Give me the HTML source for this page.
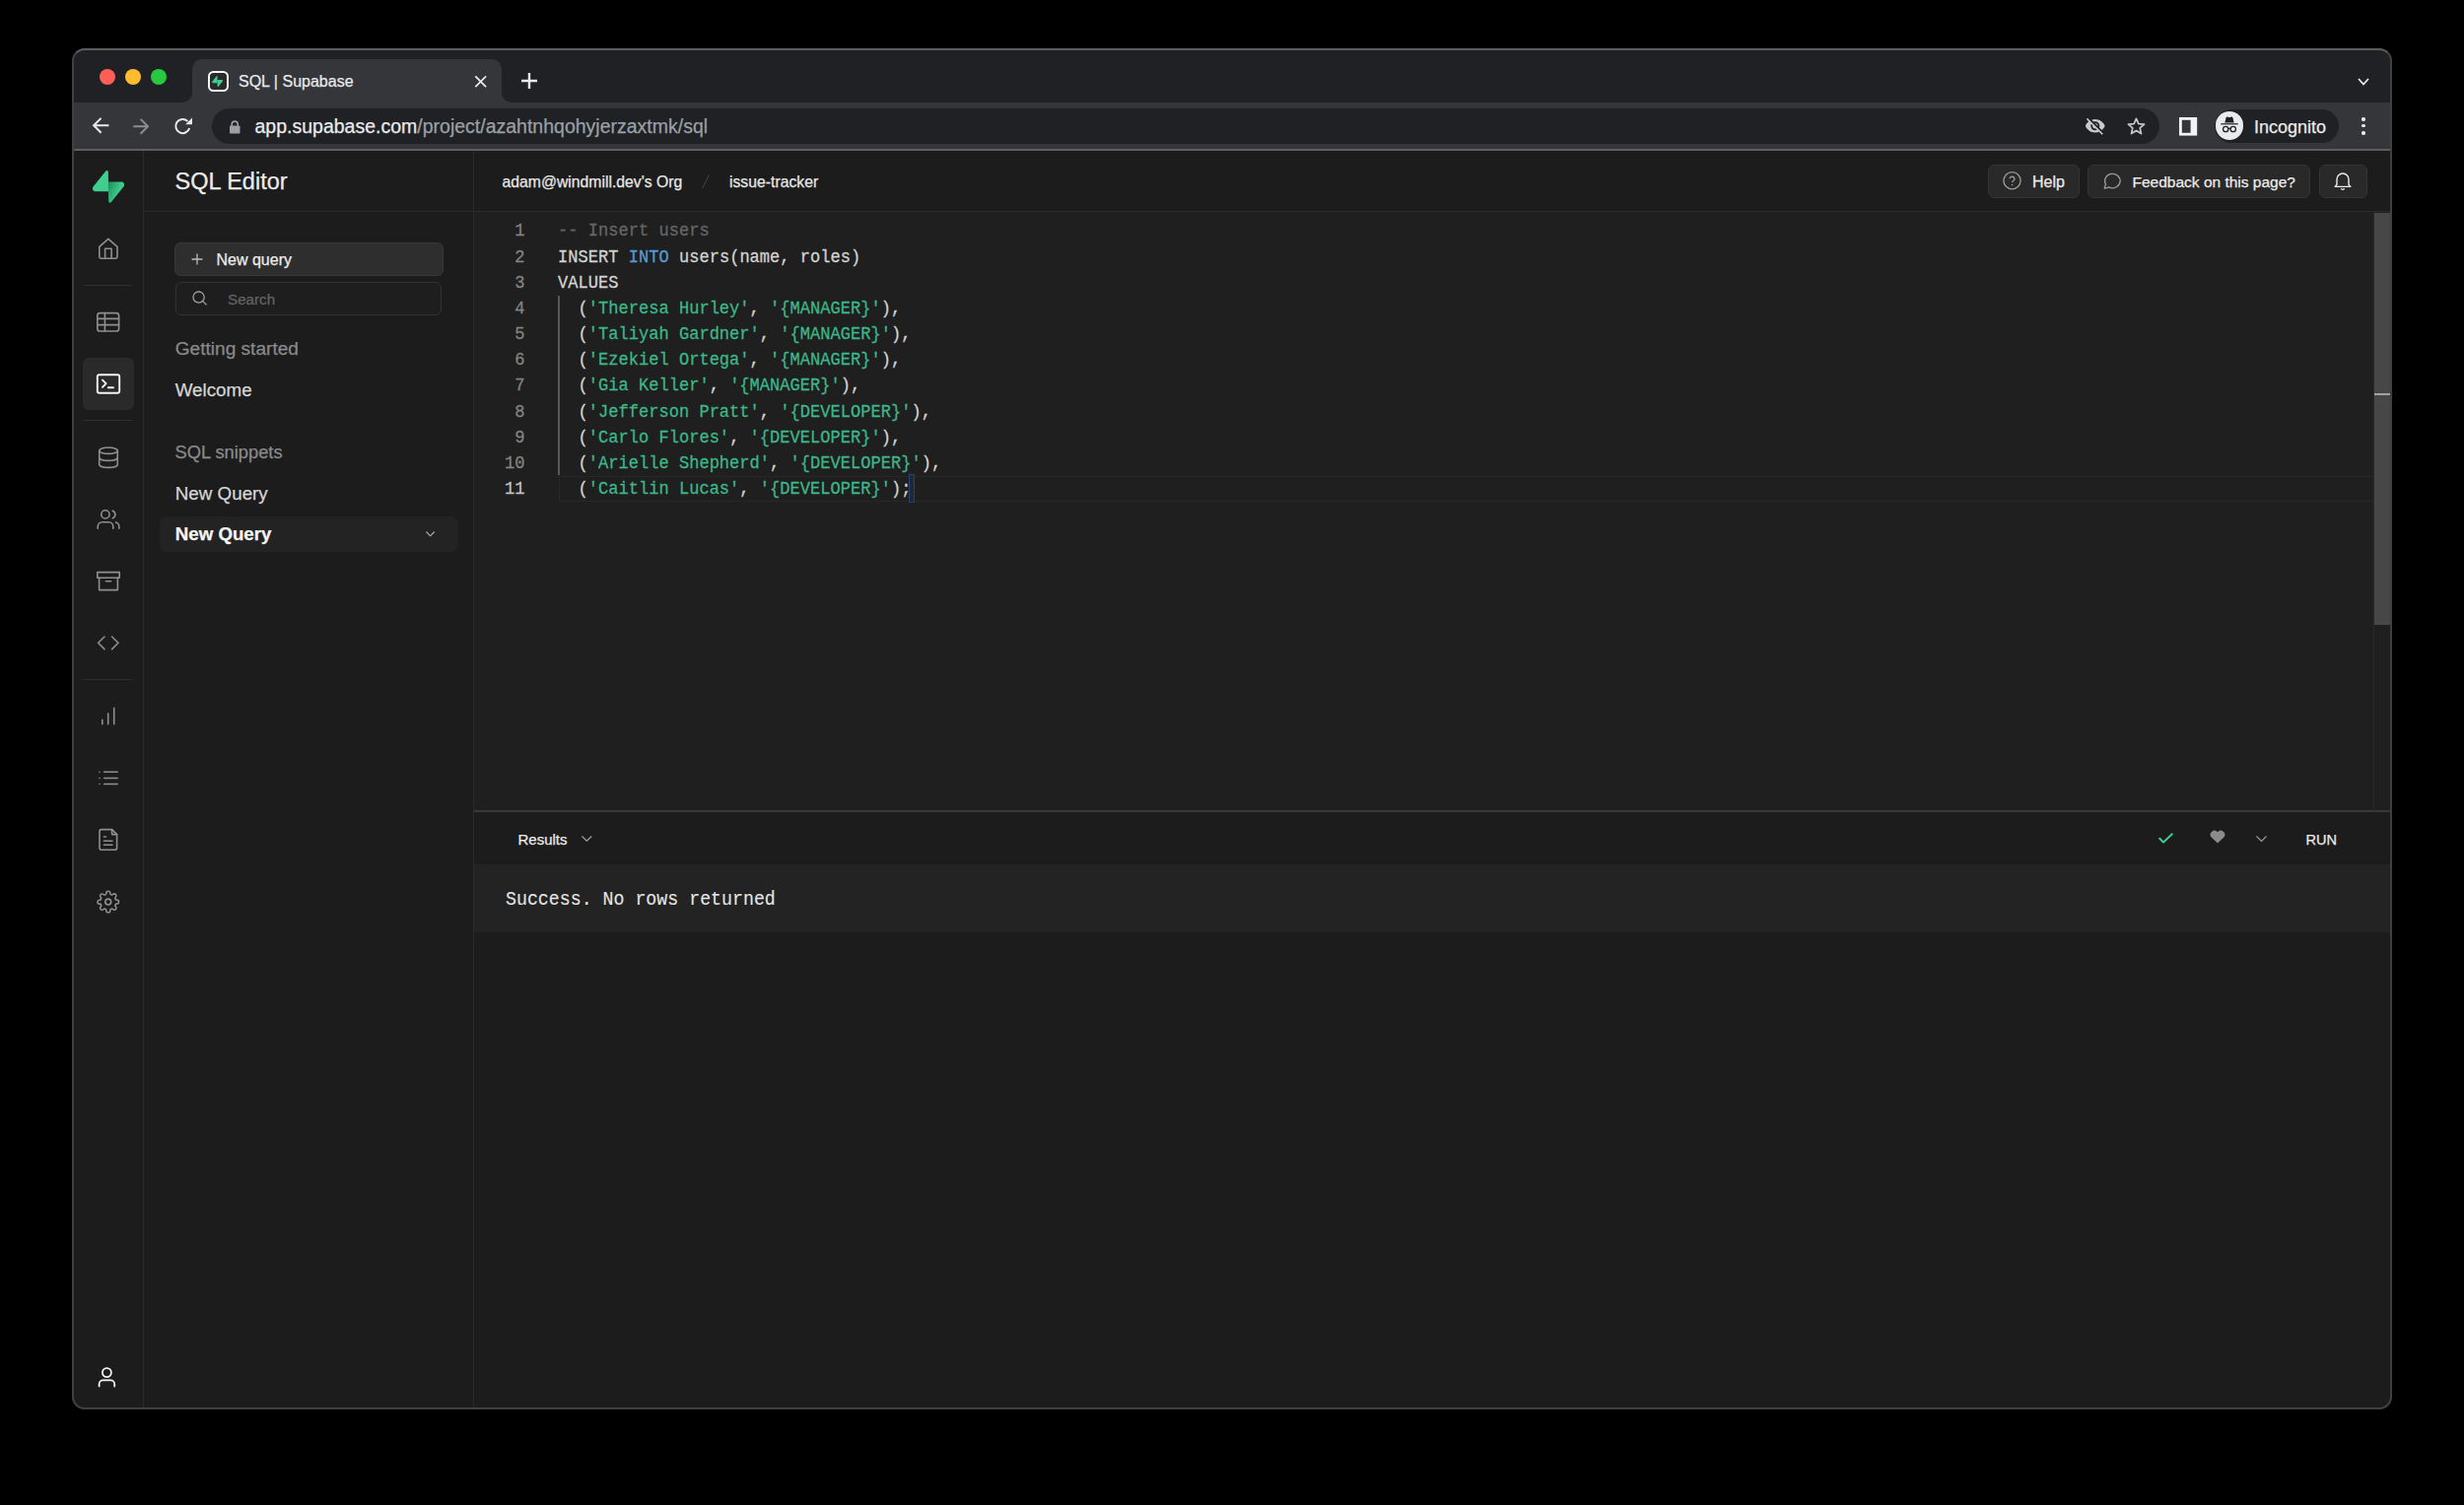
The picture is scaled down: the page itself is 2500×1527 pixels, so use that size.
<!DOCTYPE html>
<html><head><meta charset="utf-8">
<style>
*{box-sizing:border-box;margin:0;padding:0}
html,body{width:2500px;height:1527px;background:#000;overflow:hidden}
body{font-family:"Liberation Sans",sans-serif;position:relative}
.a{position:absolute}
#win{position:absolute;left:73px;top:49px;width:2354px;height:1381px;border-radius:13px;overflow:hidden;background:#1c1c1c}
#inner{position:absolute;left:-73px;top:-49px;width:2500px;height:1527px}
#winb{position:absolute;left:73px;top:49px;width:2354px;height:1381px;border-radius:13px;border:2px solid #404040;border-top-color:#5c5c5c;pointer-events:none}
.mono{font-family:"Liberation Mono",monospace}
.t{white-space:pre;line-height:1;-webkit-text-stroke:0.25px currentColor}
svg{position:absolute;overflow:visible}
</style></head><body>
<div id="win"><div id="inner">
  <!-- title bar -->
  <div class="a" style="left:0;top:0;width:2500px;height:104px;background:#202124"></div>
  <!-- tab -->
  <div class="a" style="left:195px;top:60px;width:314px;height:44px;background:#35363a;border-radius:10px 10px 0 0"></div>
  <div class="a" style="left:185px;top:94px;width:10px;height:10px;background:#35363a"></div>
  <div class="a" style="left:175px;top:84px;width:20px;height:20px;background:#202124;border-radius:0 0 10px 0"></div>
  <div class="a" style="left:509px;top:94px;width:10px;height:10px;background:#35363a"></div>
  <div class="a" style="left:509px;top:84px;width:20px;height:20px;background:#202124;border-radius:0 0 0 10px"></div>
  <!-- toolbar -->
  <div class="a" style="left:0;top:104px;width:2500px;height:48px;background:#35363a"></div>
  <div class="a" style="left:0;top:151px;width:2500px;height:2px;background:#5c5d5d"></div>

  <!-- traffic lights -->
  <div class="a" style="left:100.5px;top:69.7px;width:16px;height:16px;border-radius:50%;background:#fe5f57"></div>
  <div class="a" style="left:126.5px;top:69.7px;width:16px;height:16px;border-radius:50%;background:#febc2e"></div>
  <div class="a" style="left:152.8px;top:69.7px;width:16px;height:16px;border-radius:50%;background:#28c840"></div>
  <!-- favicon -->
  <div class="a" style="left:210.5px;top:71.9px;width:21px;height:21px;border:2.5px solid #f4f4f4;border-radius:5.5px;background:#2a2a2a"></div>
  <svg style="left:215px;top:76.7px" width="11.2" height="11.2" viewBox="0 0 109 113"><path d="M63.7 110.3c-2.9 3.6-8.7 1.6-8.8-3l-1-67.8h45.9c8.3 0 12.9 9.6 7.7 16z" fill="#3ecf8e"/><path d="M45.3 2.1c2.9-3.6 8.7-1.6 8.8 3l.4 67.8H9.2c-8.3 0-12.9-9.6-7.7-16z" fill="#3ecf8e"/></svg>
  <div class="a t" style="left:242px;top:75px;font-size:16px;color:#e8eaed">SQL | Supabase</div>
  <!-- close x -->
  <svg style="left:482px;top:76.8px" width="11.5" height="11.5" viewBox="0 0 12 12"><path d="M1 1L11 11M11 1L1 11" stroke="#e8eaed" stroke-width="1.8" stroke-linecap="square"/></svg>
  <!-- new tab plus -->
  <svg style="left:529px;top:74px" width="16" height="16" viewBox="0 0 16 16"><path d="M8 0V16M0 8H16" stroke="#e8eaed" stroke-width="2.4"/></svg>
  <!-- tab strip chevron -->
  <svg style="left:2392px;top:78.7px" width="12" height="8" viewBox="0 0 12 8"><path d="M1 1L6 6.5L11 1" stroke="#e8eaed" stroke-width="1.8" fill="none"/></svg>
  <!-- back -->
  <svg style="left:93px;top:119.3px" width="17.5" height="16.6" viewBox="0 0 17.5 16.6"><path d="M17.4 8.3H2M9.6 0.9L2.1 8.3L9.6 15.7" stroke="#e8eaed" stroke-width="2" fill="none"/></svg>
  <!-- forward -->
  <svg style="left:135.2px;top:119.5px" width="16.6" height="16.6" viewBox="0 0 16.6 16.6"><path d="M0.2 8.3H15M7.6 0.9L15 8.3L7.6 15.7" stroke="#8b8d90" stroke-width="2" fill="none"/></svg>
  <!-- reload -->
  <svg style="left:177px;top:119.3px" width="18" height="18" viewBox="0 0 18 18"><path d="M15.2 11A7.1 7.1 0 1 1 13.4 4" stroke="#e8eaed" stroke-width="2" fill="none"/><path d="M11.2 7.3H18V0.5Z" fill="#e8eaed"/></svg>
  <!-- omnibox -->
  <div class="a" style="left:214.6px;top:110px;width:1976px;height:35.8px;border-radius:18px;background:#202124"></div>
  <svg style="left:233px;top:121.6px" width="10.5" height="13.5" viewBox="0 0 10.5 13.5"><path d="M2.2 6V4.2A3.05 3.05 0 0 1 8.3 4.2V6" stroke="#9aa0a6" stroke-width="1.6" fill="none"/><rect x="0" y="5.6" width="10.5" height="7.9" rx="1" fill="#9aa0a6"/></svg>
  <div class="a t" style="left:258.5px;top:119px;font-size:19.5px;color:#e8eaed">app.supabase.com<span style="color:#9aa0a6">/project/azahtnhqohyjerzaxtmk/sql</span></div>
  <!-- eye slash -->
  <svg style="left:2115.2px;top:116.65px" width="21.6" height="21.6" viewBox="0 0 24 24"><path fill="#c8cacc" d="M12 7c2.76 0 5 2.24 5 5 0 .65-.13 1.26-.36 1.83l2.92 2.92c1.51-1.26 2.7-2.89 3.43-4.75-1.73-4.39-6-7.5-11-7.5-1.4 0-2.74.25-3.98.7l2.16 2.16C10.74 7.13 11.35 7 12 7zM2 4.27l2.28 2.28.46.46C3.08 8.3 1.78 10.02 1 12c1.73 4.39 6 7.5 11 7.5 1.550 0 3.03-.3 4.38-.84l.42.42L19.730 22 21 20.73 3.27 3 2 4.27zM7.53 9.8l1.55 1.55c-.05.21-.08.43-.08.65 0 1.66 1.34 3 3 3 .22 0 .44-.03.65-.08l1.55 1.55c-.67.33-1.41.53-2.2.53-2.76 0-5-2.24-5-5 0-.79.2-1.53.53-2.2zm4.31-.78l3.15 3.15.02-.16c0-1.66-1.34-3-3-3l-.17.01z"/></svg>
  <!-- star -->
  <svg style="left:2158px;top:119px" width="19" height="18" viewBox="0 0 19 18"><path d="M9.5 1.3L11.8 6.6L17.6 7.1L13.2 10.9L14.5 16.6L9.5 13.6L4.5 16.6L5.8 10.9L1.4 7.1L7.2 6.6Z" stroke="#c4c7ca" stroke-width="1.7" fill="none" stroke-linejoin="round"/></svg>
  <!-- side panel -->
  <svg style="left:2211px;top:118.8px" width="18.2" height="18.6" viewBox="0 0 18.2 18.6"><rect x="0" y="0" width="18.2" height="18.6" fill="#f1f3f4"/><rect x="2.8" y="2.8" width="8.8" height="13" fill="#35363a"/></svg>
  <!-- incognito pill -->
  <div class="a" style="left:2246.6px;top:111px;width:126.5px;height:34px;border-radius:17px;background:#202124"></div>
  <div class="a" style="left:2247.7px;top:113.3px;width:28.8px;height:28.8px;border-radius:50%;background:#e8eaed"></div>
  <svg style="left:2250px;top:116px" width="24" height="22" viewBox="0 0 24 22"><path d="M7.3 8.6L8.6 3.3C8.8 2.6 9.5 2.3 10.1 2.6L12 3.3L13.9 2.6C14.5 2.3 15.2 2.6 15.4 3.3L16.7 8.6Z" fill="#202124"/><rect x="3.2" y="9.2" width="17.6" height="1.2" fill="#202124"/><circle cx="8.2" cy="15" r="2.7" stroke="#202124" stroke-width="1.3" fill="none"/><circle cx="15.8" cy="15" r="2.7" stroke="#202124" stroke-width="1.3" fill="none"/><path d="M10.9 14.6Q12 13.8 13.1 14.6" stroke="#202124" stroke-width="1.2" fill="none"/></svg>
  <div class="a t" style="left:2287px;top:120px;font-size:18px;color:#e8eaed">Incognito</div>
  <!-- kebab -->
  <div class="a" style="left:2396.3px;top:119.4px;width:3.4px;height:3.4px;border-radius:50%;background:#e8eaed"></div>
  <div class="a" style="left:2396.3px;top:126px;width:3.4px;height:3.4px;border-radius:50%;background:#e8eaed"></div>
  <div class="a" style="left:2396.3px;top:133.4px;width:3.4px;height:3.4px;border-radius:50%;background:#e8eaed"></div>
  <!-- app -->
  <div class="a" style="left:0;top:153px;width:2500px;height:1380px;background:#1c1c1c"></div>
  <!-- icon sidebar border -->
  <div class="a" style="left:145px;top:153px;width:1px;height:1300px;background:#2b2b2b"></div>
  <!-- second column border -->
  <div class="a" style="left:480px;top:153px;width:1px;height:1300px;background:#2b2b2b"></div>
  <!-- header bottom border -->
  <div class="a" style="left:146px;top:213.5px;width:2300px;height:1px;background:#2b2b2b"></div>
  <!-- editor bg -->
  <div class="a" style="left:481px;top:214.5px;width:1950px;height:608px;background:#1f1f1f"></div>
  <!-- splitter -->
  <div class="a" style="left:481px;top:822.3px;width:1950px;height:1.6px;background:#393939"></div>
  <!-- results header -->
  <div class="a" style="left:481px;top:824px;width:1950px;height:53px;background:#1c1c1c"></div>
  <!-- success panel -->
  <div class="a" style="left:481px;top:877px;width:1950px;height:68.8px;background:#232323"></div>

  <!-- sidebar logo -->
  <svg style="left:93.5px;top:173px" width="32" height="33" viewBox="0 0 109 113"><defs><linearGradient id="lg1" x1="53.97" y1="54.97" x2="94.16" y2="71.83" gradientUnits="userSpaceOnUse"><stop offset="0" stop-color="#249361"/><stop offset="1" stop-color="#3ECF8E"/></linearGradient></defs><path d="M63.7 110.3c-2.9 3.6-8.7 1.6-8.8-3l-1-67.8h45.9c8.3 0 12.9 9.6 7.7 16z" fill="url(#lg1)"/><path d="M45.3 2.1c2.9-3.6 8.7-1.6 8.8 3l.4 67.8H9.2c-8.3 0-12.9-9.6-7.7-16z" fill="#3ECF8E"/></svg>
  <!-- separators -->
  <div class="a" style="left:84px;top:289px;width:50px;height:1px;background:#2e2e2e"></div>
  <div class="a" style="left:84px;top:426px;width:50px;height:1px;background:#2e2e2e"></div>
  <div class="a" style="left:84px;top:689px;width:50px;height:1px;background:#2e2e2e"></div>
  <!-- active bg -->
  <div class="a" style="left:84px;top:362.7px;width:51.7px;height:53.3px;border-radius:6px;background:#2a2a2a"></div>
  <!-- CONTENT -->
  <div class="a t" style="left:177.5px;top:173.3px;font-size:23.5px;color:#ededed;">SQL Editor</div>
  <div class="a" style="left:176.8px;top:245.7px;width:273px;height:34px;border-radius:6px;background:#2e2e2e;border:1px solid #383838"></div>
  <svg style="left:194px;top:257.4px" width="12" height="12" viewBox="0 0 12 12"><path d="M6 0.5V11.5M0.5 6H11.5" stroke="#bdbdbd" stroke-width="1.3"/></svg>
  <div class="a t" style="left:219.5px;top:256.45px;font-size:16px;color:#ededed;">New query</div>
  <div class="a" style="left:178.3px;top:286px;width:269.7px;height:33.5px;border-radius:6px;background:#1e1e1e;border:1px solid #333"></div>
  <svg style="left:194.8px;top:295.4px" width="16" height="15" viewBox="0 0 16 15"><circle cx="6.6" cy="6.6" r="5.6" stroke="#a3a3a3" stroke-width="1.3" fill="none"/><path d="M10.8 10.6L14.6 14.4" stroke="#a3a3a3" stroke-width="1.3"/></svg>
  <div class="a t" style="left:231px;top:295.63px;font-size:15.2px;color:#646464;">Search</div>
  <div class="a t" style="left:177.7px;top:344.31px;font-size:19.1px;color:#8a8a8a;">Getting started</div>
  <div class="a t" style="left:177.7px;top:386.8px;font-size:18.8px;color:#d6d6d6;">Welcome</div>
  <div class="a t" style="left:177.5px;top:449.51px;font-size:18.3px;color:#8a8a8a;">SQL snippets</div>
  <div class="a t" style="left:177.8px;top:491.5px;font-size:18.8px;color:#d6d6d6;">New Query</div>
  <div class="a" style="left:161.6px;top:523.6px;width:303.2px;height:36.4px;border-radius:7px;background:#232323"></div>
  <div class="a t" style="left:177.8px;top:532.6px;font-size:18.7px;color:#f6f6f6;font-weight:700;">New Query</div>
  <svg style="left:432.4px;top:539px" width="9.2" height="5.4" viewBox="0 0 9.2 5.4"><path d="M0.5 0.5L4.6 4.8L8.7 0.5" stroke="#b5b5b5" stroke-width="1.1" fill="none"/></svg>
  <div class="a t" style="left:509.5px;top:177.3px;font-size:15.75px;color:#e8e8e8;">adam@windmill.dev's Org</div>
  <svg style="left:712px;top:176.8px" width="8" height="14.6" viewBox="0 0 8 14.6"><path d="M7.5 0.3L0.5 14.3" stroke="#3c3c3c" stroke-width="1.2"/></svg>
  <div class="a t" style="left:740px;top:177.3px;font-size:15.75px;color:#e8e8e8;">issue-tracker</div>
  <div class="a" style="left:2016.9px;top:167.1px;width:93.1px;height:33.6px;border-radius:6px;background:#292929;border:1px solid #343434"></div>
  <div class="a" style="left:2118.2px;top:167.1px;width:225.6px;height:33.6px;border-radius:6px;background:#292929;border:1px solid #343434"></div>
  <div class="a" style="left:2352.6px;top:167.1px;width:49.2px;height:33.6px;border-radius:6px;background:#292929;border:1px solid #343434"></div>
  <svg style="left:2032px;top:174.4px" width="19" height="18.5" viewBox="0 0 19 18.5"><circle cx="9.5" cy="9.25" r="8.6" stroke="#9a9a9a" stroke-width="1.3" fill="none"/><path d="M7 7.1A2.55 2.55 0 0 1 12 7.6C12 9.3 9.5 9.9 9.5 11" stroke="#9a9a9a" stroke-width="1.3" fill="none"/><circle cx="9.5" cy="13.6" r="0.8" fill="#9a9a9a"/></svg>
  <div class="a t" style="left:2062px;top:176.75px;font-size:16px;color:#ededed;">Help</div>
  <svg style="left:2134.4px;top:175.3px" width="18" height="17" viewBox="0 0 18 17"><path d="M1.2 16C1.5 14.2 2 13 2.6 12.1A7.8 7.2 0 1 1 5.7 14.9C4.5 15.5 2.9 15.9 1.2 16Z" stroke="#9a9a9a" stroke-width="1.3" fill="none" stroke-linejoin="round"/></svg>
  <div class="a t" style="left:2163.5px;top:177.18px;font-size:15.5px;color:#ededed;">Feedback on this page?</div>
  <svg style="left:2368px;top:174.4px" width="18" height="19" viewBox="0 0 18 19"><path d="M3 13.2V8A6 6 0 0 1 15 8V13.2L16.8 15.4H1.2Z" stroke="#ededed" stroke-width="1.4" fill="none" stroke-linejoin="round"/><path d="M7.3 17.2A1.9 1.9 0 0 0 10.7 17.2" stroke="#ededed" stroke-width="1.4" fill="none"/></svg>
  <div class="a" style="left:2408px;top:214.6px;width:1px;height:608px;background:#2a2a2a"></div>
  <div class="a" style="left:2409px;top:215.8px;width:17px;height:418.2px;background:#474747"></div>
  <div class="a" style="left:2409px;top:399.4px;width:17px;height:2px;background:#a3a3a3"></div>
  <div class="a" style="left:567px;top:483.3px;width:1841px;height:25.8px;border:1px solid #282828;border-right:none"></div>
  <div class="a" style="left:566.2px;top:299.6px;width:1.6px;height:182.6px;background:#585858"></div>
  <div class="a t mono" style="left:566.05px;top:226.47px;font-size:17.07px;transform:scaleY(1.1);transform-origin:0 13px;color:#d4d4d4;"><span style="color:#666">-- Insert users</span></div>
  <div class="a t mono" style="left:483px;width:49.5px;text-align:right;top:226.47px;font-size:17.07px;transform:scaleY(1.1);transform-origin:0 13px;color:#858585">1</div>
  <div class="a t mono" style="left:566.05px;top:252.62px;font-size:17.07px;transform:scaleY(1.1);transform-origin:0 13px;color:#d4d4d4;">INSERT <span style="color:#569cd6">INTO</span> users(name, roles)</div>
  <div class="a t mono" style="left:483px;width:49.5px;text-align:right;top:252.62px;font-size:17.07px;transform:scaleY(1.1);transform-origin:0 13px;color:#858585">2</div>
  <div class="a t mono" style="left:566.05px;top:278.77px;font-size:17.07px;transform:scaleY(1.1);transform-origin:0 13px;color:#d4d4d4;">VALUES</div>
  <div class="a t mono" style="left:483px;width:49.5px;text-align:right;top:278.77px;font-size:17.07px;transform:scaleY(1.1);transform-origin:0 13px;color:#858585">3</div>
  <div class="a t mono" style="left:566.05px;top:304.92px;font-size:17.07px;transform:scaleY(1.1);transform-origin:0 13px;color:#d4d4d4;">  (<span style="color:#3cb88a">'Theresa Hurley'</span>, <span style="color:#3cb88a">'{MANAGER}'</span>),</div>
  <div class="a t mono" style="left:483px;width:49.5px;text-align:right;top:304.92px;font-size:17.07px;transform:scaleY(1.1);transform-origin:0 13px;color:#858585">4</div>
  <div class="a t mono" style="left:566.05px;top:331.07px;font-size:17.07px;transform:scaleY(1.1);transform-origin:0 13px;color:#d4d4d4;">  (<span style="color:#3cb88a">'Taliyah Gardner'</span>, <span style="color:#3cb88a">'{MANAGER}'</span>),</div>
  <div class="a t mono" style="left:483px;width:49.5px;text-align:right;top:331.07px;font-size:17.07px;transform:scaleY(1.1);transform-origin:0 13px;color:#858585">5</div>
  <div class="a t mono" style="left:566.05px;top:357.22px;font-size:17.07px;transform:scaleY(1.1);transform-origin:0 13px;color:#d4d4d4;">  (<span style="color:#3cb88a">'Ezekiel Ortega'</span>, <span style="color:#3cb88a">'{MANAGER}'</span>),</div>
  <div class="a t mono" style="left:483px;width:49.5px;text-align:right;top:357.22px;font-size:17.07px;transform:scaleY(1.1);transform-origin:0 13px;color:#858585">6</div>
  <div class="a t mono" style="left:566.05px;top:383.37px;font-size:17.07px;transform:scaleY(1.1);transform-origin:0 13px;color:#d4d4d4;">  (<span style="color:#3cb88a">'Gia Keller'</span>, <span style="color:#3cb88a">'{MANAGER}'</span>),</div>
  <div class="a t mono" style="left:483px;width:49.5px;text-align:right;top:383.37px;font-size:17.07px;transform:scaleY(1.1);transform-origin:0 13px;color:#858585">7</div>
  <div class="a t mono" style="left:566.05px;top:409.52px;font-size:17.07px;transform:scaleY(1.1);transform-origin:0 13px;color:#d4d4d4;">  (<span style="color:#3cb88a">'Jefferson Pratt'</span>, <span style="color:#3cb88a">'{DEVELOPER}'</span>),</div>
  <div class="a t mono" style="left:483px;width:49.5px;text-align:right;top:409.52px;font-size:17.07px;transform:scaleY(1.1);transform-origin:0 13px;color:#858585">8</div>
  <div class="a t mono" style="left:566.05px;top:435.67px;font-size:17.07px;transform:scaleY(1.1);transform-origin:0 13px;color:#d4d4d4;">  (<span style="color:#3cb88a">'Carlo Flores'</span>, <span style="color:#3cb88a">'{DEVELOPER}'</span>),</div>
  <div class="a t mono" style="left:483px;width:49.5px;text-align:right;top:435.67px;font-size:17.07px;transform:scaleY(1.1);transform-origin:0 13px;color:#858585">9</div>
  <div class="a t mono" style="left:566.05px;top:461.82px;font-size:17.07px;transform:scaleY(1.1);transform-origin:0 13px;color:#d4d4d4;">  (<span style="color:#3cb88a">'Arielle Shepherd'</span>, <span style="color:#3cb88a">'{DEVELOPER}'</span>),</div>
  <div class="a t mono" style="left:483px;width:49.5px;text-align:right;top:461.82px;font-size:17.07px;transform:scaleY(1.1);transform-origin:0 13px;color:#858585">10</div>
  <div class="a t mono" style="left:566.05px;top:487.97px;font-size:17.07px;transform:scaleY(1.1);transform-origin:0 13px;color:#d4d4d4;">  (<span style="color:#3cb88a">'Caitlin Lucas'</span>, <span style="color:#3cb88a">'{DEVELOPER}'</span>);</div>
  <div class="a t mono" style="left:483px;width:49.5px;text-align:right;top:487.97px;font-size:17.07px;transform:scaleY(1.1);transform-origin:0 13px;color:#c6c6c6">11</div>
  <div class="a" style="left:922px;top:481px;width:6px;height:29px;border:1px solid #25437a;background:#1f2834"></div>
  <div class="a t" style="left:525.5px;top:843.90px;font-size:15px;color:#ededed;">Results</div>
  <svg style="left:590px;top:847.6px" width="10.7" height="5.7" viewBox="0 0 10.7 5.7"><path d="M0.5 0.5L5.35 5.2L10.2 0.5" stroke="#a8a8a8" stroke-width="1.1" fill="none"/></svg>
  <svg style="left:2190px;top:845px" width="15" height="11" viewBox="0 0 15 11"><path d="M1.2 5.8L5 9.6L13.8 1.2" stroke="#3ecf8e" stroke-width="2" fill="none" stroke-linecap="round" stroke-linejoin="round"/></svg>
  <svg style="left:2241.7px;top:842px" width="16" height="14" viewBox="0 0 16 14"><path d="M8 13.6L1.6 7.4A4 4 0 0 1 8 2.3A4 4 0 0 1 14.4 7.4Z" fill="#8b8b8b"/></svg>
  <svg style="left:2288.5px;top:848px" width="11" height="6" viewBox="0 0 11 6"><path d="M0.5 0.5L5.5 5.5L10.5 0.5" stroke="#a0a0a0" stroke-width="1.1" fill="none"/></svg>
  <div class="a t" style="left:2339.5px;top:844.72px;font-size:14.5px;color:#ededed;">RUN</div>
  <div class="a t mono" style="left:513px;top:904.22px;font-size:18.25px;transform:scaleY(1.07);transform-origin:0 14px;-webkit-text-stroke:0.1px currentColor;color:#e6e6e6;">Success. No rows returned</div>
  <svg style="left:0;top:0" width="2500" height="1527" viewBox="0 0 2500 1527" fill="none" stroke="#8f8f8f" stroke-width="1.6" stroke-linecap="round" stroke-linejoin="round">
    <!-- home -->
    <path d="M100.8 250.3L109.9 242.4L119 250.3V260.6A1.6 1.6 0 0 1 117.4 262.2H102.4A1.6 1.6 0 0 1 100.8 260.6Z"/>
    <path d="M106.6 262.2V252.3H113.1V262.2"/>
    <!-- table -->
    <rect x="98.8" y="317.6" width="21.8" height="18.4" rx="2.6"/>
    <path d="M98.8 323.4H120.6M98.8 329.6H120.6M106.4 317.6V336"/>
    <!-- terminal -->
    <rect x="98.8" y="380.3" width="22.4" height="18.4" rx="2" stroke="#f3f3f3" stroke-width="1.9"/>
    <path d="M104 385.6L107.6 389.2L104 392.8M109.8 393.2H115" stroke="#f3f3f3" stroke-width="1.9"/>
    <!-- database -->
    <ellipse cx="110" cy="457.2" rx="9.3" ry="3.2"/>
    <path d="M100.7 457.2V471.2C100.7 473 104.9 474.4 110 474.4S119.3 473 119.3 471.2V457.2"/>
    <path d="M100.7 464.2C100.7 466 104.9 467.4 110 467.4S119.3 466 119.3 464.2"/>
    <!-- users -->
    <circle cx="106.9" cy="521.9" r="4.1"/>
    <path d="M99.2 536.2V534.4A4.6 4.6 0 0 1 103.8 529.8H110.2A4.6 4.6 0 0 1 114.8 534.4V536.2"/>
    <path d="M114.3 518.2A4.1 4.1 0 0 1 114.3 525.8"/>
    <path d="M117.6 529.9A4.6 4.6 0 0 1 120.8 534.4V536.2"/>
    <!-- archive -->
    <rect x="98.8" y="580.6" width="22.4" height="5.6"/>
    <path d="M100.6 586.2V598.6H119.4V586.2M107.4 589.8H112.6"/>
    <!-- code -->
    <path d="M106 646L99.6 652.3L106 658.6M113.6 646L120 652.3L113.6 658.6"/>
    <!-- chart -->
    <path d="M103.8 734.8V730.4M109.7 734.8V724M115.7 734.8V718.4"/>
    <!-- list -->
    <path d="M105.6 783.2H119.2M105.6 789.5H119.2M105.6 795.5H119.2M101 783.2H101.01M101 789.5H101.01M101 795.5H101.01"/>
    <!-- file -->
    <path d="M113.6 841.6H103A2 2 0 0 0 101 843.6V860.2A2 2 0 0 0 103 862.2H116.6A2 2 0 0 0 118.6 860.2V846.6Z"/>
    <path d="M113.6 841.6V846.6H118.6M105.4 849H107.6M105.4 853.2H114M105.4 857.3H114"/>
    <!-- gear -->
    <g transform="translate(98,903.3) scale(0.98)">
      <circle cx="12" cy="12" r="3"/>
      <path d="M19.4 15a1.65 1.65 0 0 0 .33 1.82l.06.06a2 2 0 0 1 0 2.83 2 2 0 0 1-2.83 0l-.06-.06a1.65 1.65 0 0 0-1.82-.33 1.65 1.65 0 0 0-1 1.51V21a2 2 0 0 1-2 2 2 2 0 0 1-2-2v-.09A1.65 1.65 0 0 0 9 19.4a1.65 1.65 0 0 0-1.82.33l-.06.06a2 2 0 0 1-2.83 0 2 2 0 0 1 0-2.83l.06-.06a1.65 1.65 0 0 0 .33-1.82 1.65 1.65 0 0 0-1.51-1H3a2 2 0 0 1-2-2 2 2 0 0 1 2-2h.09A1.65 1.65 0 0 0 4.6 9a1.65 1.65 0 0 0-.33-1.82l-.06-.06a2 2 0 0 1 0-2.830 2 2 0 0 1 2.83 0l.06.06a1.65 1.65 0 0 0 1.82.33H9a1.65 1.65 0 0 0 1-1.51V3a2 2 0 0 1 2-2 2 2 0 0 1 2 2v.09a1.65 1.65 0 0 0 1 1.51 1.65 1.65 0 0 0 1.82-.33l.06-.06a2 2 0 0 1 2.83 0 2 2 0 0 1 0 2.83l-.06.06a1.65 1.65 0 0 0-.33 1.82V9a1.65 1.65 0 0 0 1.51 1H21a2 2 0 0 1 2 2 2 2 0 0 1-2 2h-.09a1.65 1.65 0 0 0-1.51 1z" stroke-width="1.6"/>
    </g>
    <!-- user bottom -->
    <circle cx="108.4" cy="1392.6" r="4.5" stroke="#f3f3f3" stroke-width="1.8"/>
    <path d="M100.6 1406.6V1404.4A4 4 0 0 1 104.6 1400.4H112.2A4 4 0 0 1 116.2 1404.4V1406.6" stroke="#f3f3f3" stroke-width="1.8"/>
  </svg>
</div></div>
<div id="winb"></div>
</body></html>
